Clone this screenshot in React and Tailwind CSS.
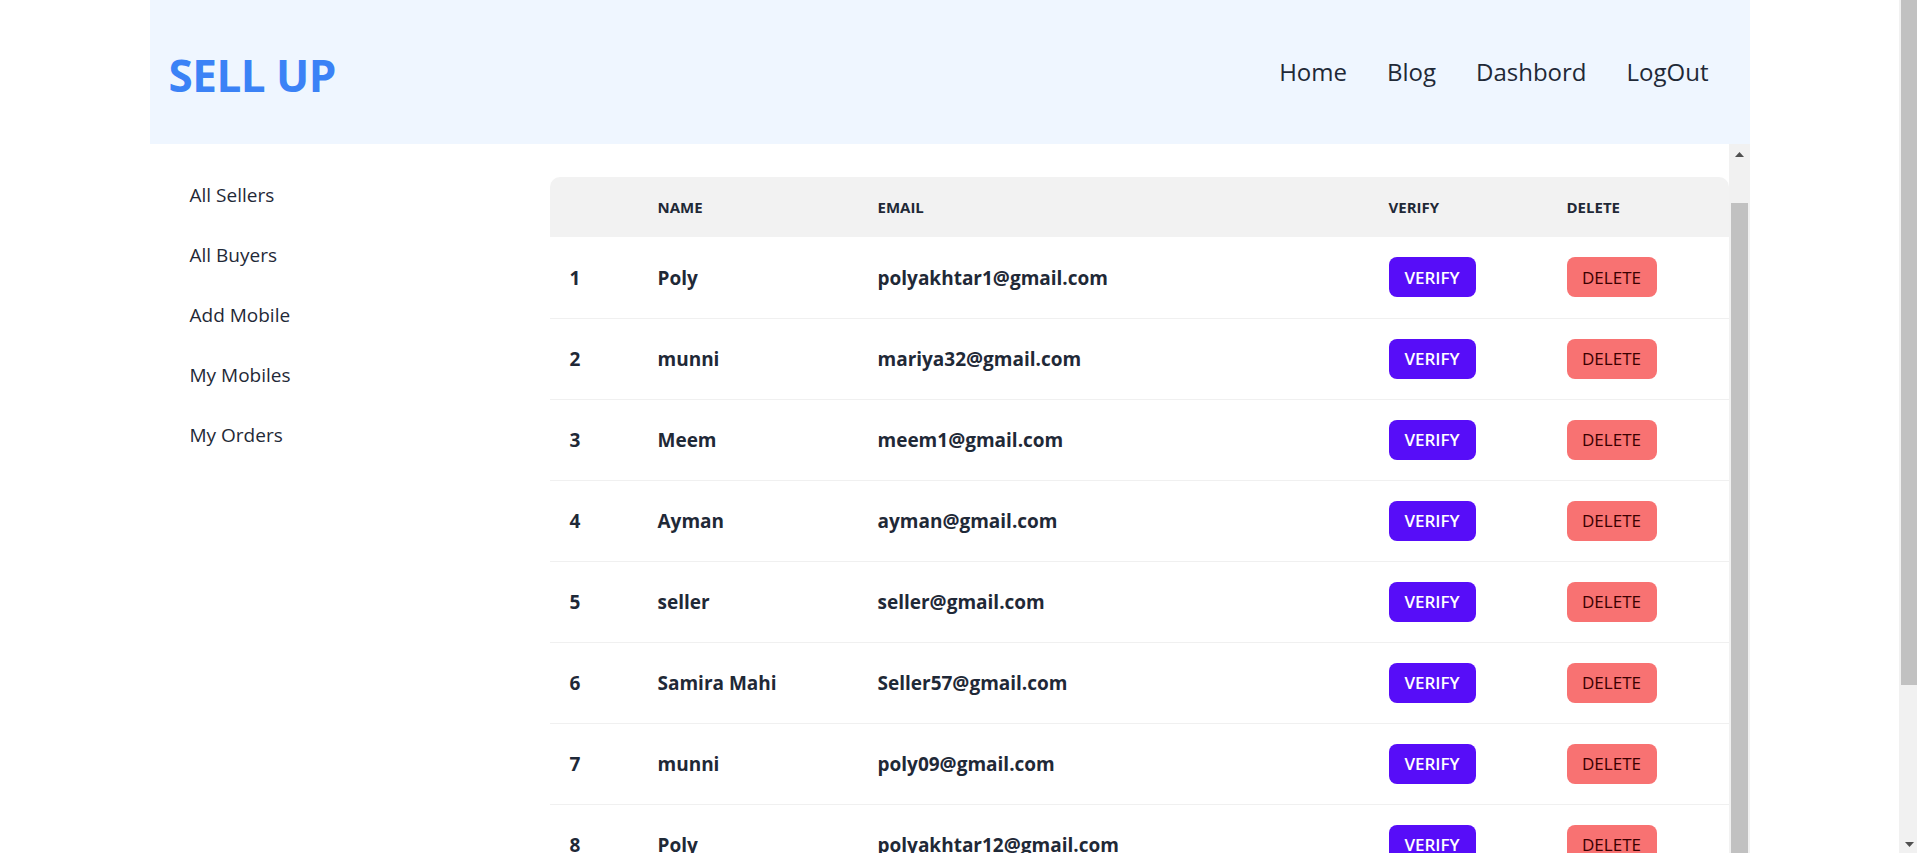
import React from "react";

const sellers = [
  { name: "Poly", email: "polyakhtar1@gmail.com" },
  { name: "munni", email: "mariya32@gmail.com" },
  { name: "Meem", email: "meem1@gmail.com" },
  { name: "Ayman", email: "ayman@gmail.com" },
  { name: "seller", email: "seller@gmail.com" },
  { name: "Samira Mahi", email: "Seller57@gmail.com" },
  { name: "munni", email: "poly09@gmail.com" },
  { name: "Poly", email: "polyakhtar12@gmail.com" },
  { name: "munni", email: "munni@gmail.com" },
];

const menu = ["All Sellers", "All Buyers", "Add Mobile", "My Mobiles", "My Orders"];
const nav = ["Home", "Blog", "Dashbord", "LogOut"];

function ArrowUp() {
  return (
    <svg width="9" height="5" viewBox="0 0 9 5">
      <path d="M0 5 L4.5 0 L9 5 Z" fill="#505050" />
    </svg>
  );
}
function ArrowDown() {
  return (
    <svg width="9" height="5" viewBox="0 0 9 5">
      <path d="M0 0 L9 0 L4.5 5 Z" fill="#505050" />
    </svg>
  );
}

export default function App() {
  return (
    <div
      className="flex h-[853px] w-full overflow-hidden bg-white text-[#1f2937]"
      style={{ fontFamily: '"Open Sans", "Noto Sans", sans-serif' }}
    >
      <div className="flex min-w-0 flex-1 flex-col">
        <div className="mx-auto flex h-full w-[1600px] flex-col">
          {/* header */}
          <header className="flex h-[144px] shrink-0 items-center justify-between bg-[#eff6ff] pl-[19px] pr-[21px]">
            <div className="mt-[6px] text-[44px] font-bold leading-none tracking-[-0.5px] text-[#3b82f6]">
              SELL UP
            </div>
            <nav className="flex items-center">
              {nav.map((n) => (
                <a key={n} className="px-[20px] text-[24px] leading-none text-[#1f2937]">
                  {n}
                </a>
              ))}
            </nav>
          </header>

          <div className="flex min-h-0 flex-1">
            {/* sidebar */}
            <aside className="w-[400px] shrink-0 pl-[40px] pt-[21px]">
              <ul className="flex flex-col">
                {menu.map((m) => (
                  <li key={m} className="flex h-[60px] items-center text-[19px] text-[#1f2937]">
                    {m}
                  </li>
                ))}
              </ul>
            </aside>

            {/* main */}
            <div className="flex min-h-0 flex-1 overflow-hidden">
              <div className="min-w-0 flex-1 pt-[33px]">
                <table className="w-full table-fixed border-collapse text-left">
                  <colgroup>
                    <col className="w-[90px]" />
                    <col className="w-[220px]" />
                    <col className="w-[511px]" />
                    <col className="w-[178px]" />
                    <col />
                  </colgroup>
                  <thead>
                    <tr className="h-[60px]">
                      <th className="rounded-tl-[10px] bg-[#f2f2f2] pl-[20px]"></th>
                      <th className="bg-[#f2f2f2] pl-[18px] text-[15px] font-bold uppercase">Name</th>
                      <th className="bg-[#f2f2f2] pl-[18px] text-[15px] font-bold uppercase">Email</th>
                      <th className="bg-[#f2f2f2] pl-[18px] text-[15px] font-bold uppercase">Verify</th>
                      <th className="rounded-tr-[10px] bg-[#f2f2f2] pl-[18px] text-[15px] font-bold uppercase">Delete</th>
                    </tr>
                  </thead>
                  <tbody>
                    {sellers.map((s, i) => (
                      <tr key={i} className="h-[81px] border-b border-[#f0f0f0]">
                        <td className="pl-[20px] pt-[1px] text-[19px] font-bold">{i + 1}</td>
                        <td className="pl-[18px] pt-[1px] text-[19px] font-bold">{s.name}</td>
                        <td className="pl-[18px] pt-[1px] text-[19px] font-bold">{s.email}</td>
                        <td className="pl-[18px]">
                          <button className="flex h-[40px] w-[87px] items-center justify-center rounded-[8px] bg-[#570df8] text-[17px] font-semibold text-white">
                            VERIFY
                          </button>
                        </td>
                        <td className="pl-[18px]">
                          <button className="flex h-[40px] w-[90px] items-center justify-center rounded-[8px] bg-[#f87272] text-[17px] font-medium text-[#3a0000]">
                            DELETE
                          </button>
                        </td>
                      </tr>
                    ))}
                  </tbody>
                </table>
              </div>
              {/* inner scrollbar */}
              <div className="flex w-[21px] shrink-0 flex-col bg-[#f1f1f1]">
                <div className="flex h-[21px] items-center justify-center">
                  <ArrowUp />
                </div>
                <div className="h-[38px]" />
                <div className="mx-[2px] flex-1 bg-[#c1c1c1]" />
              </div>
            </div>
          </div>
        </div>
      </div>

      {/* page scrollbar */}
      <div className="flex w-[18px] shrink-0 flex-col bg-[#f1f1f1]">
        <div className="ml-[2px] h-[685px] bg-[#c1c1c1]" />
        <div className="flex-1" />
        <div className="flex h-[17px] items-center justify-center pl-[2px]">
          <ArrowDown />
        </div>
      </div>
    </div>
  );
}
